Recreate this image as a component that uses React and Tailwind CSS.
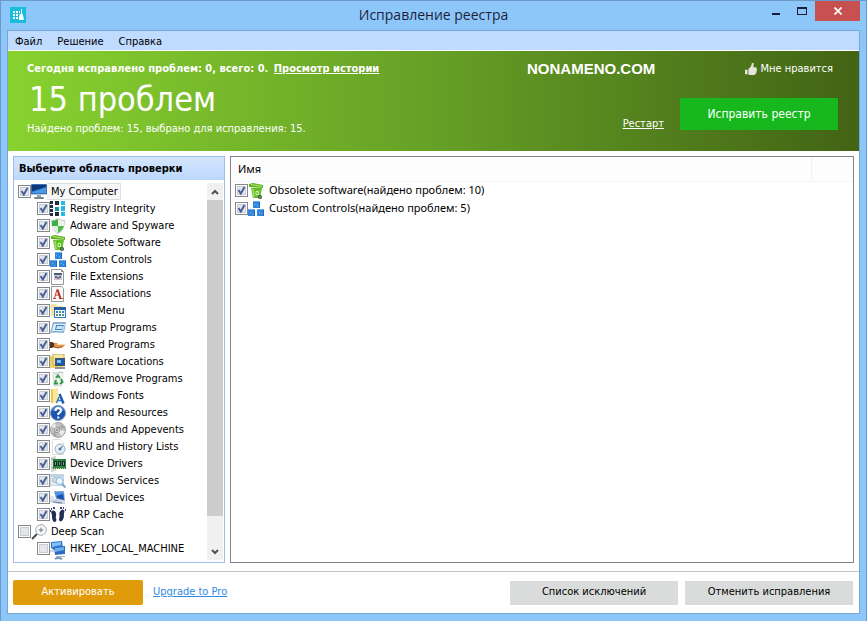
import React, { useState } from 'react';

const icons = {
  computer: (
    <>
      <rect x="0" y="0" width="16" height="11" rx="1" fill="#3f6fb4" />
      <path d="M1 1h14v8H1z" fill="#1d62bd" />
      <path d="M1 1h14v3Q8 4 1 7z" fill="#10397c" />
      <path d="M1 9V8q7-2 14-5v6z" fill="#4a97e6" />
      <path d="M0 10h16v1H0z" fill="#b4cbe8" />
      <rect x="6" y="11" width="4" height="2" fill="#9aa3ad" />
      <rect x="3" y="13" width="10" height="2" rx="1" fill="#7a828c" />
    </>
  ),
  registry: (
    <>
      <path d="M0 0h3v3H0zM0 4h3v3H0zM0 8h3v3H0zM0 12h3v3H0zM5 0h4v4H5zM5 11h4v4H5z" fill="#1f2c3b" />
      <path d="M5 6h4v4H5z" fill="#1892a8" />
      <path d="M11 0h4v4h-4zM11 5h4v5h-4zM11 11h4v4h-4z" fill="#22bde4" />
    </>
  ),
  shield: (
    <>
      <path d="M1 2q4 0 7-2 3 2 7 2 0 10-7 14Q1 12 1 2z" fill="#c5cdc8" />
      <path d="M2 3q3 0 6-2v7H2z" fill="#3fae45" />
      <path d="M8 1q3 2 6 2v5H8z" fill="#eaf4eb" />
      <path d="M2 8h6v7Q3 12 2 8z" fill="#e2efe4" />
      <path d="M8 8h6q-1 4-6 7z" fill="#52bd4d" />
    </>
  ),
  bin: (
    <>
      <path d="M1 1l4-1 10 2v3L1 4z" fill="#5fb31d" />
      <path d="M3 1.500l11 2" stroke="#b9e57f" />
      <path d="M3 5h11l-2 10H5z" fill="#63bf27" />
      <path d="M5 6l1 8" stroke="#a4de68" strokeWidth="1.500" />
      <path d="M8 8.500h2.500v3H8z" stroke="#d4f3b6" fill="none" />
      <circle cx="12" cy="14" r="2" fill="#35553a" />
      <path d="M11.500 14h1" stroke="#fff" />
    </>
  ),
  blocks: (
    <>
      <path d="M5 0h7v7H5zM0 8h7v7H0zM9 8h7v7H9z" fill="#2f86dc" />
      <path d="M5 0h7v1H5zM0 8h7v1H0zM9 8h7v1H9z" fill="#66adef" />
      <path d="M11 1h1v6h-1zM6 9h1v6H6zM15 9h1v6h-1z" fill="#2068b8" />
      <path d="M6 3h1v1H6zM9 4h1v1H9zM2 11h1v1H2zM4 13h1v1H4zM11 11h1v1h-1zM13 12h1v1h-1z" fill="#79bbf5" />
    </>
  ),
  file: (
    <>
      <path d="M1.500.5h10l2 2v13h-12z" fill="#fdfdfd" stroke="#999" />
      <path d="M11.500.5v2h2" fill="none" stroke="#888" />
      <rect x="4" y="4" width="8" height="7" fill="#c3cad5" />
      <path d="M4 4h8v2H4z" fill="#4d5c77" />
      <path d="M5 7h2v2H5zM9 7h2v2H9z" fill="#4c74b5" />
      <path d="M7 8h2v2H7z" fill="#bd5858" />
    </>
  ),
  association: (
    <>
      <path d="M1.500.5h10l2 2v13h-12z" fill="#fbfbfb" stroke="#999" />
      <path d="M4.500 12L7 3.500M5.500 9H10M3 12.500h3M9 12.500h4" fill="none" stroke="#c63c32" />
      <path d="M7.500 3.500l3 9" fill="none" stroke="#b92b24" strokeWidth="2" />
    </>
  ),
  startMenu: (
    <>
      <path d="M1 1h5l1 2h6v10H1z" fill="#f4e3a0" />
      <rect x="4" y="4" width="12" height="11" fill="#3b7bc4" />
      <path d="M4 4h12v3H4z" fill="#265ca3" />
      <path d="M5 7h10v7H5z" fill="#f2f8ff" />
      <path d="M6 8h2v2H6zM12 8h2v2h-2zM9 11h2v2H9z" fill="#3d7ccc" />
      <path d="M9 8h2v2H9zM6 11h2v2H6zM12 11h2v2h-2z" fill="#57a05c" />
    </>
  ),
  startup: (
    <>
      <path d="M3 2h13l-2 11H0z" fill="#8bb2da" />
      <path d="M4 4h11l-2 7H2z" fill="#e3f1fe" />
      <path d="M6 5h8l-2 5H5z" fill="#3f80c8" />
      <path d="M7 6h6l-1 3H6z" fill="#cbe5fb" />
      <path d="M1 12.500h12" stroke="#b3cbe2" />
    </>
  ),
  shared: (
    <>
      <path d="M3 6q3-1 5 1h7q1 1-1 2-4 3-8 2l-3-1z" fill="#e2924b" />
      <path d="M7 7.500h8" stroke="#ffd9a6" fill="none" />
      <path d="M4 10q4 2 9-.5" stroke="#a35c2a" fill="none" />
      <path d="M0 5h2l2 1v4l-2 1H0z" fill="#5b3320" />
    </>
  ),
  location: (
    <>
      <path d="M0 2h5l1 2h7v10H0z" fill="#f0d566" />
      <path d="M3 0h11v11H3z" fill="#f5e9a8" stroke="#b59f4a" strokeWidth=".8" />
      <rect x="5" y="4" width="10" height="8" fill="#4c4f55" />
      <rect x="6" y="5" width="8" height="6" fill="#1e5bb0" />
      <path d="M7 6h4v3H7z" fill="#7ebcf3" />
      <path d="M5 13h10v2H5z" fill="#8e9298" />
    </>
  ),
  recycle: (
    <>
      <path d="M2 1l11-1 1 2-1 13H4z" fill="#eef1f0" />
      <path d="M3 1l3 2 4-2 3 1" stroke="#b9c2bd" fill="none" />
      <path d="M3 3l1 12h8" stroke="#d5dbd8" fill="none" />
      <path d="M6 7l2-2.500L10 7M11 8l1.500 3-2.500 2M8 12.500H5L6 9" fill="none" stroke="#2c9a3f" strokeWidth="2" />
    </>
  ),
  fonts: (
    <>
      <path d="M1 1l6 1v12l-6 1z" fill="#f0c452" />
      <path d="M3 1l5-1v13l-5 2z" fill="#fde79c" />
      <path d="M6.500 15l2.500-6M7.500 12.500H12" fill="none" stroke="#2d78c9" strokeWidth="1.500" />
      <path d="M9.500 6l4 9.500" fill="none" stroke="#1e5db0" strokeWidth="2.500" />
    </>
  ),
  help: (
    <>
      <circle cx="8" cy="8" r="7.500" fill="#1d53ab" stroke="#7f9fce" />
      <path d="M2 6q2-5 6-5t6 5q-6-2-12 0z" fill="#5c8bd0" />
      <path d="M5.500 6q0-3 2.700-3T11 5.500q0 1.500-2.700 3V10M8.300 11.500v2" fill="none" stroke="#fff" strokeWidth="2" />
    </>
  ),
  sound: (
    <>
      <circle cx="8" cy="8" r="7.500" fill="#c2c2c2" stroke="#a5a5a5" />
      <path d="M7 8L1 4l4-3zM7 8l8 1-3 5z" fill="#e9e9e9" />
      <path d="M7 8l5-6 3 4zM7 8l-5 4 4 3z" fill="#a9a9a9" />
      <circle cx="7" cy="8" r="2.500" fill="#e6e6e6" stroke="#8c8c8c" />
      <circle cx="7" cy="8" r="1" fill="#777" />
    </>
  ),
  history: (
    <>
      <path d="M2.500.5h8l3 3v12h-11z" fill="#fff" stroke="#dedede" />
      <circle cx="10" cy="10" r="5" fill="#e3edf5" stroke="#a3b2bf" />
      <circle cx="10" cy="10" r="1.500" fill="#4a80b4" />
      <path d="M10 10l2.500-3" fill="none" stroke="#385c7b" />
    </>
  ),
  driver: (
    <>
      <path d="M1 1l5-1v15l-5 1z" fill="#d4d9d8" />
      <path d="M1 3h4M1 12h4" stroke="#9ca5a3" />
      <rect x="3" y="3" width="13" height="10" fill="#2d8144" />
      <path d="M4 5h3v5H4zM8 5h3v5H8zM12 5h3v5h-3z" fill="#12301f" />
      <path d="M5 6h1v3H5zM9 6h1v3H9zM13 6h1v3h-1z" fill="#7ba37f" />
      <path d="M4 12.500h11" stroke="#dfd35c" strokeDasharray="1 1" />
    </>
  ),
  services: (
    <>
      <path d="M.5 1.500h13v11H.5z" fill="#e6eef4" stroke="#c5d5e1" />
      <path d="M1 2h12v2H1z" fill="#bcd3e5" />
      <circle cx="5" cy="7" r="2.500" fill="#d5dfe6" stroke="#a9bac7" />
      <circle cx="9.500" cy="8" r="3.500" fill="#e8f6ff" stroke="#8eb4d0" />
      <path d="M12 11l3.500 3.500" stroke="#7ba8cc" strokeWidth="2" />
    </>
  ),
  virtual: (
    <>
      <path d="M4 1h10l1 10-9-2z" fill="#8fa9c9" />
      <path d="M5 2h8l1 8-7-2z" fill="#1651b2" />
      <path d="M5 2h8v2L6 6z" fill="#4f95e2" />
      <path d="M1 9l6 0 8 3v2H9L0 12z" fill="#c7d2dc" />
      <path d="M0 6h4v4H0z" fill="#dde3e8" />
      <path d="M3 12l9 1" stroke="#71869b" />
    </>
  ),
  feet: (
    <>
      <path d="M1.500 4.500Q4 2 6 5q1 2 0 4t0 4q-.5 2-2 2t-2-2 0-4-.5-4.500z" fill="#222f55" transform="rotate(-8 4 9)" />
      <path d="M14 4Q12 1 10 4 8.500 6 9.500 8.500t0 3.500q0 2 1.500 2.500t2.500-2 .5-4T14 4z" fill="#222f55" transform="rotate(8 12 8)" />
      <path d="M0 3h1v2H0zM1 1h1v2H1zM3 0h2v2H3zM10 0h2v2h-2zM13 0h1v2h-1zM15 2h1v2h-1z" fill="#344974" />
    </>
  ),
  scan: (
    <>
      <path d="M1 15l5-5" stroke="#4b4b4b" strokeWidth="2" />
      <circle cx="10" cy="6" r="5.300" fill="#fafbfc" stroke="#a1a7ab" />
      <path d="M7.500 6h5M10 3.500v5" stroke="#6e757b" />
    </>
  ),
  network: (
    <>
      <path d="M1 1l11-1 1 8-9 1-3-2z" fill="#2d79cf" />
      <path d="M2 2l9-1v3L2 6z" fill="#7fc0f6" />
      <path d="M4 6l11-1v8l-10 1z" fill="#2a6cbf" />
      <path d="M5 7l9-1v3l-9 2z" fill="#6fb0ea" />
      <path d="M0 9h4v2H0z" fill="#c7d6e4" />
      <path d="M8 13h4v1H8zM6 15h9v1H6z" fill="#a8b6c4" />
    </>
  ),
};

const areas = [
  { name: 'My Computer', icon: 'computer', root: true, checked: true, selected: true },
  { name: 'Registry Integrity', icon: 'registry', checked: true },
  { name: 'Adware and Spyware', icon: 'shield', checked: true },
  { name: 'Obsolete Software', icon: 'bin', checked: true },
  { name: 'Custom Controls', icon: 'blocks', checked: true },
  { name: 'File Extensions', icon: 'file', checked: true },
  { name: 'File Associations', icon: 'association', checked: true },
  { name: 'Start Menu', icon: 'startMenu', checked: true },
  { name: 'Startup Programs', icon: 'startup', checked: true },
  { name: 'Shared Programs', icon: 'shared', checked: true },
  { name: 'Software Locations', icon: 'location', checked: true },
  { name: 'Add/Remove Programs', icon: 'recycle', checked: true },
  { name: 'Windows Fonts', icon: 'fonts', checked: true },
  { name: 'Help and Resources', icon: 'help', checked: true },
  { name: 'Sounds and Appevents', icon: 'sound', checked: true },
  { name: 'MRU and History Lists', icon: 'history', checked: true },
  { name: 'Device Drivers', icon: 'driver', checked: true },
  { name: 'Windows Services', icon: 'services', checked: true },
  { name: 'Virtual Devices', icon: 'virtual', checked: true },
  { name: 'ARP Cache', icon: 'feet', checked: true },
  { name: 'Deep Scan', icon: 'scan', root: true, checked: false },
  { name: 'HKEY_LOCAL_MACHINE', icon: 'network', checked: false },
];

const results = [
  { name: 'Obsolete software(найдено проблем: 10)', icon: 'bin' },
  { name: 'Custom Controls(найдено проблем: 5)', icon: 'blocks' },
];

const Icon = ({ name }) => (
  <svg className="size-4 shrink-0" viewBox="0 0 16 16" aria-hidden="true">
    {icons[name]}
  </svg>
);

const CheckBox = ({ id, initial }) => {
  const [checked, setChecked] = useState(initial);

  return (
    <span className="grid size-[13px] shrink-0">
      <input
        id={id}
        type="checkbox"
        checked={checked}
        onChange={() => setChecked(!checked)}
        className="col-start-1 row-start-1 size-[13px] appearance-none border border-[#85888b] bg-white"
      />
      <svg className="pointer-events-none z-10 col-start-1 row-start-1 size-[13px]" viewBox="0 0 13 13" aria-hidden="true">
        <rect x="2.500" y="2.500" width="8" height="8" fill="#e4e6e9" stroke="#c9ccd1" />
        {checked && <path d="M3.500 6l2.300 3.500L9.500 3" fill="none" stroke="#48619b" strokeWidth="2" />}
      </svg>
    </span>
  );
};

const TitleBar = () => (
  <header className="grid h-[29px] grid-cols-[1fr_auto_1fr]">
    <div className="pl-[9px] pt-1.5">
      <svg className="size-4" viewBox="0 0 16 16" aria-hidden="true">
        <rect width="16" height="16" fill="#18bddd" />
        <path d="M3 4h2v2H3zM6 4h2v2H6zM9 4h1v2H9zM3 7h2v2H3zM6 7h2v2H6zM3 10h2v2H3zM6 10h2v2H6z" fill="#fff" />
        <path d="M11 2h1v4l1 2 1 5H9v-3l1-3h1z" fill="#fff" />
      </svg>
    </div>
    <h1 className="pt-0.5 font-['Open_Sans','Noto_Sans',sans-serif] text-[14px] leading-6 text-[#1e1e3c]">
      Исправление реестра
    </h1>
    <div className="flex items-start justify-end pr-1.5">
      <button aria-label="Свернуть" className="flex h-5 w-[26px] justify-center pt-3">
        <svg width="8" height="2" viewBox="0 0 8 2"><path d="M0 0h8v2H0z" fill="#1e1e3c" /></svg>
      </button>
      <button aria-label="Развернуть" className="flex h-5 w-[26px] justify-center pt-1.5">
        <svg width="10" height="8" viewBox="0 0 10 8"><path d="M0 0h10v8H0zM1 2v5h8V2z" fill="#1e1e3c" fillRule="evenodd" /></svg>
      </button>
      <button aria-label="Закрыть" className="flex h-5 w-[45px] items-center justify-center bg-[#c75050]">
        <svg width="8" height="8" viewBox="0 0 8 8"><path d="M.5.500l7 7M7.500.5l-7 7" stroke="#fff" strokeWidth="1.700" /></svg>
      </button>
    </div>
  </header>
);

const Banner = () => (
  <section className="flex h-[100px] justify-between bg-linear-to-r from-[#88d22f] via-[#66a026] via-50% to-[#426415] pl-[19px] pr-[21px] text-white">
    <div>
      <p className="pt-2.5 text-[11px] font-bold leading-4">
        Сегодня исправлено проблем: 0, всего: 0.{' '}
        <a href="#history" className="ml-0.5 underline">Просмотр истории</a>
      </p>
      <h2 className="pl-0.5 pt-0.5 text-[34px] leading-10">15 проблем</h2>
      <p className="pt-0.5 text-[11px] leading-4">Найдено проблем: 15, выбрано для исправления: 15.</p>
    </div>
    <div className="flex w-[311px] flex-col">
      <div className="flex items-center justify-between pr-[5px] pt-2.5">
        <span className="font-['Liberation_Sans',sans-serif] text-[15px] font-bold leading-4">NONAMENO.COM</span>
        <button className="flex items-center gap-1 text-[11px] leading-4">
          <svg className="size-3" viewBox="0 0 14 14" aria-hidden="true">
            <path d="M0 8h3v5H0zM4 7l3-3 1-4h2v4l-1 1h4l1 3-1 4-2 2H5l-1-1z" fill="#e4e5df" />
          </svg>
          Мне нравится
        </button>
      </div>
      <div className="flex items-end justify-end gap-4 pt-[21px]">
        <a href="#restart" className="text-[11px] leading-3 underline">Рестарт</a>
        <button className="h-8 w-[158px] bg-[#16b81e] text-[12px]">Исправить реестр</button>
      </div>
    </div>
  </section>
);

const AreaTree = () => (
  <aside className="flex w-[212px] shrink-0 flex-col border border-[#9dbdea]">
    <h2 className="h-[23px] bg-linear-to-b from-[#d5e6fd] to-[#bbd7fc] pl-[5px] text-[11px] font-bold leading-6 text-black">
      Выберите область проверки
    </h2>
    <div className="flex flex-1 pb-0.5 pr-px pt-[3px]">
      <ul className="min-w-0 flex-1 pl-1">
        {areas.map((area) => (
          <li key={area.name} className={`flex h-[17px] items-center ${area.root ? '' : 'pl-[19px]'}`}>
            <CheckBox id={area.icon} initial={area.checked} />
            <Icon name={area.icon} />
            <label
              htmlFor={area.icon}
              className={`whitespace-nowrap pl-1 pr-0.5 pt-px leading-4 ${area.selected ? 'border-y border-r border-[#dedede] bg-[#f7f7f7] leading-[14px]' : ''}`}
            >
              {area.name}
            </label>
          </li>
        ))}
        <li className="flex h-[3px] overflow-hidden pl-8">
          <svg className="size-4" viewBox="0 0 16 16" aria-hidden="true">
            <path d="M5 2q3-2 7 0" stroke="#7894b8" strokeWidth="2" fill="none" />
          </svg>
        </li>
      </ul>
      <div className="flex w-4 flex-col bg-[#f0f0f0]">
        <button aria-label="Вверх" className="flex h-[17px] items-center justify-center">
          <svg width="8" height="6" viewBox="0 0 8 6"><path d="M1 5l3-3 3 3" fill="none" stroke="#505050" strokeWidth="2" /></svg>
        </button>
        <div className="flex-1">
          <div className="h-[92%] bg-[#cdcdcd]"></div>
        </div>
        <button aria-label="Вниз" className="flex h-[17px] items-center justify-center">
          <svg width="8" height="6" viewBox="0 0 8 6"><path d="M1 1l3 3 3-3" fill="none" stroke="#505050" strokeWidth="2" /></svg>
        </button>
      </div>
    </div>
  </aside>
);

const ResultsTable = () => (
  <section className="min-w-0 flex-1 border border-[#82838b] font-['Noto_Sans','Open_Sans',sans-serif] text-[11px]">
    <table className="w-full border-collapse">
      <thead>
        <tr className="h-6 border-b border-[#f1f5f8] bg-[#fdfdfd]">
          <th className="border-r border-[#eef2f5] p-0 pl-[7px] text-left font-normal">Имя</th>
          <th className="w-[42px]"></th>
        </tr>
      </thead>
      <tbody>
        {results.map((result) => (
          <tr key={result.name}>
            <td className="p-0 pl-1" colSpan="2">
              <div className="flex h-[18px] items-center">
                <CheckBox id={`result-${result.icon}`} initial={true} />
                <Icon name={result.icon} />
                <label htmlFor={`result-${result.icon}`} className="pl-[5px]">{result.name}</label>
              </div>
            </td>
          </tr>
        ))}
      </tbody>
    </table>
  </section>
);

const Footer = () => (
  <footer className="flex items-center border-t border-[#c2c2c2] pb-2 pl-[5px] pr-1.5 pt-2">
    <button className="h-[25px] w-[130px] rounded-xs bg-[#df9b0a] text-white">Активировать</button>
    <a href="#upgrade" className="ml-2.5 text-[#2f8be0] underline">Upgrade to Pro</a>
    <div className="ml-auto flex gap-[7px]">
      <button className="h-6 w-[168px] bg-[#dadcdb]">Список исключений</button>
      <button className="h-6 w-[168px] bg-[#dadcdb]">Отменить исправления</button>
    </div>
  </footer>
);

const App = () => {
  return (
    <div className="flex min-h-screen flex-col border border-[#6b98c6] bg-[#8dc7fa] font-['DejaVu_Sans_Condensed','DejaVu_Sans',sans-serif] text-[11px] text-black">
      <TitleBar />
      <main className="mx-1.5 mb-[7px] flex flex-1 flex-col border border-[#76a6d5] bg-white">
        <nav className="flex h-5 items-center gap-[15px] border-b border-white bg-[#bfdbff] pl-[7px]">
          <button className="pt-0.5 leading-4">Файл</button>
          <button className="pt-0.5 leading-4">Решение</button>
          <button className="pt-0.5 leading-4">Справка</button>
        </nav>
        <Banner />
        <div className="flex flex-1 gap-[5px] px-[5px] pb-2 pt-[5px]">
          <AreaTree />
          <ResultsTable />
        </div>
        <Footer />
      </main>
    </div>
  );
};

export default App;
